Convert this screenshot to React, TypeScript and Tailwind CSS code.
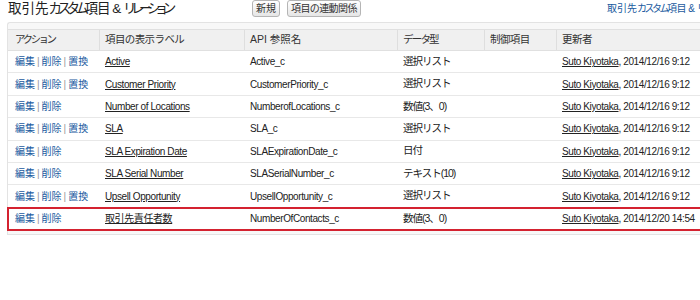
import React from "react";

interface FieldRow {
    actions: string[];
    label: string;
    api: string;
    type: string;
    control: string;
    updatedBy: string;
    updatedAt: string;
    highlight?: boolean;
}

const rows: FieldRow[] = [
    {actions: ["編集", "削除", "置換"], label: "Active", api: "Active_c", type: "選択リスト", control: "", updatedBy: "Suto Kiyotaka", updatedAt: "2014/12/16 9:12"},
    {actions: ["編集", "削除", "置換"], label: "Customer Priority", api: "CustomerPriority_c", type: "選択リスト", control: "", updatedBy: "Suto Kiyotaka", updatedAt: "2014/12/16 9:12"},
    {actions: ["編集", "削除"], label: "Number of Locations", api: "NumberofLocations_c", type: "数値(3、0)", control: "", updatedBy: "Suto Kiyotaka", updatedAt: "2014/12/16 9:12"},
    {actions: ["編集", "削除", "置換"], label: "SLA", api: "SLA_c", type: "選択リスト", control: "", updatedBy: "Suto Kiyotaka", updatedAt: "2014/12/16 9:12"},
    {actions: ["編集", "削除"], label: "SLA Expiration Date", api: "SLAExpirationDate_c", type: "日付", control: "", updatedBy: "Suto Kiyotaka", updatedAt: "2014/12/16 9:12"},
    {actions: ["編集", "削除"], label: "SLA Serial Number", api: "SLASerialNumber_c", type: "テキスト(10)", control: "", updatedBy: "Suto Kiyotaka", updatedAt: "2014/12/16 9:12"},
    {actions: ["編集", "削除", "置換"], label: "Upsell Opportunity", api: "UpsellOpportunity_c", type: "選択リスト", control: "", updatedBy: "Suto Kiyotaka", updatedAt: "2014/12/16 9:12"},
    {actions: ["編集", "削除"], label: "取引先責任者数", api: "NumberOfContacts_c", type: "数値(3、0)", control: "", updatedBy: "Suto Kiyotaka", updatedAt: "2014/12/20 14:54", highlight: true},
];

// header label + its own tracking (kana-heavy labels are squeezed a bit more)
const headers = [
    {text: "アクション", cls: "pl-[7px] tracking-[-2.5px]"},
    {text: "項目の表示ラベル", cls: "pl-[5px] tracking-[-0.6px]"},
    {text: "API 参照名", cls: "pl-[5px]"},
    {text: "データ型", cls: "pl-[5px] tracking-[-1.8px]"},
    {text: "制御項目", cls: "pl-[5px] tracking-[-0.6px]"},
    {text: "更新者", cls: "pl-[5px] tracking-[-0.5px]"},
];

const gridCols = "grid grid-cols-[92px_145px_153px_87px_72px_1fr]";

export default function App() {
    return (
        <div className="w-[700px] h-[300px] bg-white overflow-hidden font-['Liberation_Sans','Noto_Sans_CJK_JP',sans-serif] text-[#222]">
            {/* title bar */}
            <div className="flex items-start h-[22px]">
                <h2 className="w-[252px] shrink-0 pl-[8px] text-[13.5px] leading-[17px] text-[#222] whitespace-nowrap">
                    <span>取引先</span>
                    <span className="tracking-[-4.5px]">カスタム</span>
                    <span className="tracking-[-1px]">項目 &amp; </span>
                    <span className="tracking-[-5.5px]">リレーション</span>
                </h2>
                <div className="flex w-[355px] shrink-0 gap-[7px]">
                    <button className="h-[17px] px-[3px] whitespace-nowrap text-[10px] leading-[15px] text-[#333] border border-[#b5b5b5] rounded-[3px] bg-gradient-to-b from-white to-[#e6e6e6]">
                        新規
                    </button>
                    <button className="h-[17px] px-[3px] whitespace-nowrap text-[10px] leading-[15px] tracking-[-0.6px] text-[#333] border border-[#b5b5b5] rounded-[3px] bg-gradient-to-b from-white to-[#e6e6e6]">
                        項目の連動関係
                    </button>
                </div>
                <a className="shrink-0 pt-[2px] text-[10px] leading-[13px] text-[#1a5a9e] whitespace-nowrap">
                    <span>取引先</span>
                    <span className="tracking-[-2.5px]">カスタム</span>
                    <span className="tracking-[-0.5px]">項目 &amp; </span>
                    <span className="tracking-[-2.5px]">リレーション</span>
                </a>
            </div>

            {/* related list panel */}
            <div className="ml-[7px] w-[720px] border border-[#e3e3e3] border-r-0 rounded-tl-[3px] bg-[#f8f8f8] pt-[6px] pb-[4px]">
                <div className={`${gridCols} h-[22px] items-center bg-[#f0f0f0] border-y border-[#e0e0e0] text-[10.5px] text-[#333]`}>
                    {headers.map((h, i) => (
                        <div
                            key={h.text}
                            className={`h-full flex items-center whitespace-nowrap ${h.cls} ${i < headers.length - 1 ? "border-r border-[#dedede]" : ""}`}
                        >
                            {h.text}
                        </div>
                    ))}
                </div>

                {rows.map((r, idx) => (
                    <div
                        key={idx}
                        className={`${gridCols} h-[22.4px] items-center bg-white text-[10px] tracking-[-0.4px] ${
                            r.highlight ? "outline-2 outline-[#d42230] -outline-offset-1" : "border-b border-[#e8e8e8]"
                        }`}
                    >
                        <div className="pl-[7px] flex items-center whitespace-nowrap tracking-normal">
                            {r.actions.map((a, i) => (
                                <React.Fragment key={a}>
                                    {i > 0 && <span className="mx-[2px] text-[#999]">|</span>}
                                    <a className="text-[#1a5a9e]">{a}</a>
                                </React.Fragment>
                            ))}
                        </div>
                        <div className="pl-[5px] whitespace-nowrap">
                            <a className="underline underline-offset-1 text-[#222]">{r.label}</a>
                        </div>
                        <div className="pl-[5px] whitespace-nowrap">{r.api}</div>
                        <div className="pl-[5px] whitespace-nowrap text-[10.5px] tracking-[-1px]">{r.type}</div>
                        <div className="pl-[5px]">{r.control}</div>
                        <div className="pl-[5px] whitespace-nowrap">
                            <a className="underline underline-offset-1 text-[#222]">{r.updatedBy}</a>
                            <span>, {r.updatedAt}</span>
                        </div>
                    </div>
                ))}
            </div>
        </div>
    );
}
